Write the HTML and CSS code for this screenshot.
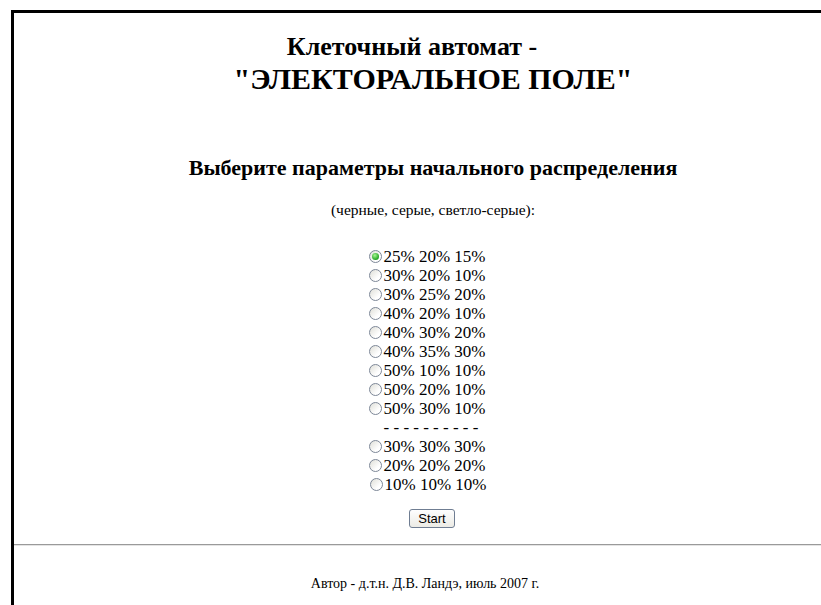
FILE: index.html
```html
<!DOCTYPE html>
<html lang="ru">
<head>
<meta charset="utf-8">
<title>Клеточный автомат - ЭЛЕКТОРАЛЬНОЕ ПОЛЕ</title>
<link rel="stylesheet" href="styles.css">
</head>
<body>
<div class="frame">
  <h1 class="title"><span class="title-top">Клеточный автомат -</span><span class="title-name">"ЭЛЕКТОРАЛЬНОЕ ПОЛЕ"</span></h1>
  <h2 class="subtitle">Выберите параметры начального распределения</h2>
  <p class="hint">(черные, серые, светло-серые):</p>
  <form class="choices">
    <label class="opt"><input type="radio" name="dist" value="25-20-15" checked>25% 20% 15%</label>
    <label class="opt"><input type="radio" name="dist" value="30-20-10">30% 20% 10%</label>
    <label class="opt"><input type="radio" name="dist" value="30-25-20">30% 25% 20%</label>
    <label class="opt"><input type="radio" name="dist" value="40-20-10">40% 20% 10%</label>
    <label class="opt"><input type="radio" name="dist" value="40-30-20">40% 30% 20%</label>
    <label class="opt"><input type="radio" name="dist" value="40-35-30">40% 35% 30%</label>
    <label class="opt"><input type="radio" name="dist" value="50-10-10">50% 10% 10%</label>
    <label class="opt"><input type="radio" name="dist" value="50-20-10">50% 20% 10%</label>
    <label class="opt"><input type="radio" name="dist" value="50-30-10">50% 30% 10%</label>
    <div class="sep">- - - - - - - - - -</div>
    <label class="opt"><input type="radio" name="dist" value="30-30-30">30% 30% 30%</label>
    <label class="opt"><input type="radio" name="dist" value="20-20-20">20% 20% 20%</label>
    <label class="opt last"><input type="radio" name="dist" value="10-10-10">10% 10% 10%</label>
    <div class="actions"><button type="button" class="start">Start</button></div>
  </form>
  <hr class="rule">
  <p class="author">Автор - д.т.н. Д.В. Ландэ, июль 2007 г.</p>
</div>
</body>
</html>
```

FILE: styles.css
```css
html {
  overflow: hidden;
}

body {
  margin: 0;
  background: #fff;
  color: #000;
  font-family: "Liberation Serif", "Times New Roman", serif;
}

.frame {
  margin: 10px 0 0 11px;
  width: 838px;
  min-height: 700px;
  border: 3px solid #000;
  text-align: center;
}

.title {
  margin: 19px 0 0;
  font-family: "Liberation Serif", "Times New Roman", serif;
  font-weight: 700;
}

.title-top,
.title-name {
  display: block;
}

.title-top {
  padding-right: 42px;
  font-size: 26px;
  line-height: 30px;
}

.title-name {
  font-size: 30px;
  line-height: 34px;
}

.subtitle {
  margin: 59px 0 0;
  font-size: 22px;
  font-weight: 700;
  line-height: 26px;
}

.hint {
  margin: 20px 0 0;
  font-size: 15.5px;
  line-height: 18px;
}

.choices {
  margin: 28px 0 0;
}

.opt,
.sep {
  display: block;
  height: 19px;
  padding-right: 12px;
  font-size: 17px;
  line-height: 19px;
}

.sep {
  padding-right: 4px;
}

.opt.last {
  padding-left: 2px;
}

.opt input {
  appearance: none;
  -webkit-appearance: none;
  position: relative;
  box-sizing: border-box;
  width: 13px;
  height: 13px;
  margin: 0 2px 0 0;
  border: 1px solid #7d8797;
  border-radius: 50%;
  background: linear-gradient(135deg, #dfdfd8, #fff 70%);
  vertical-align: -1px;
}

.opt input:checked::after {
  content: "";
  position: absolute;
  left: 2px;
  top: 2px;
  width: 7px;
  height: 7px;
  border-radius: 50%;
  background: radial-gradient(circle at 40% 35%, #a6f792, #21a421 70%, #1b8a1b);
}

.actions {
  display: flex;
  justify-content: center;
  margin-top: 15px;
  padding-right: 2px;
}

.start {
  box-sizing: border-box;
  height: 19px;
  padding: 0 8px;
  border: 1px solid #6f7d92;
  border-radius: 3px;
  background: linear-gradient(#fefefe, #ecebe5);
  color: #000;
  font-family: "Liberation Sans", Arial, sans-serif;
  font-size: 13px;
  line-height: 15px;
}

.rule {
  height: 0;
  margin: 16px 0 0;
  border: 0;
  border-top: 1px solid #9a9a9a;
  border-bottom: 1px solid #e4e4e4;
}

.author {
  margin: 30px 0 0;
  padding-right: 16px;
  font-size: 14px;
  line-height: 16px;
}
```
